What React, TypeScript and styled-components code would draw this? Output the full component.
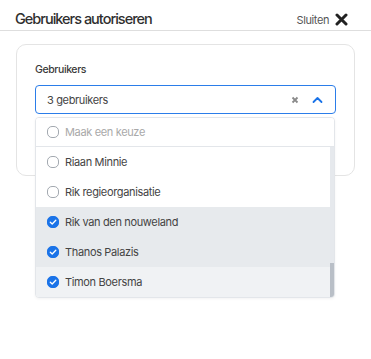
import styled, { createGlobalStyle } from "styled-components";

const GlobalStyle = createGlobalStyle`
  html, body {
    margin: 0;
    padding: 0;
    background: #ffffff;
    font-family: Inter, "Noto Sans", sans-serif;
  }
  #root {
    min-height: 100vh;
  }
`;

const Header = styled.div`
  height: 31px;
  display: flex;
  align-items: center;
  justify-content: space-between;
  padding: 9px 23px 0 15px;
  border-bottom: 1px solid #dedede;
  box-sizing: border-box;
`;

const Title = styled.h2`
  margin: 0;
  font-size: 14.5px;
  font-weight: 500;
  color: #2f2f2f;
  letter-spacing: -1px;
  line-height: 1;
`;

const CloseButton = styled.button`
  display: flex;
  align-items: center;
  gap: 6px;
  border: none;
  background: none;
  padding: 0;
  font-family: inherit;
  font-size: 11px;
  color: #555;
  letter-spacing: -0.4px;
  cursor: pointer;
`;

const Body = styled.div`
  padding: 13px 16px;
`;

const Card = styled.div`
  position: relative;
  height: 132px;
  box-sizing: border-box;
  border: 1px solid #e4e4e4;
  border-radius: 10px;
  padding: 18px 18px;
`;

const Label = styled.div`
  font-size: 10.5px;
  font-weight: 500;
  color: #3a3a3a;
  letter-spacing: -0.4px;
  line-height: 14px;
  margin-bottom: 8px;
`;

const Select = styled.div`
  position: relative;
  height: 29px;
  box-sizing: border-box;
  border: 1px solid #2b7de9;
  border-radius: 4px;
  display: flex;
  align-items: center;
  padding: 0 12px 0 11px;
  font-size: 11px;
  color: #444;
  letter-spacing: -0.35px;
`;

const SelectValue = styled.span`
  flex: 1;
`;

const SelectIcons = styled.div`
  display: flex;
  align-items: center;
  gap: 13px;
`;

const Menu = styled.div`
  position: absolute;
  top: 31px;
  left: -1px;
  width: 298px;
  background: #fff;
  border: 1px solid #e3e6ea;
  border-radius: 4px;
  box-shadow: 0 1px 3px rgba(0, 0, 0, 0.05);
  z-index: 2;
  overflow: hidden;
`;

const List = styled.div`
  display: flex;
  height: 150px;
`;

const Rows = styled.div`
  flex: 1;
`;

const ScrollTrack = styled.div`
  width: 4px;
  background: #e6e9ed;
  display: flex;
  flex-direction: column;
`;

const ScrollThumb = styled.div`
  margin-top: auto;
  height: 34px;
  background: #b9bfc7;
`;

const Row = styled.div<{ $bg?: string; $header?: boolean }>`
  height: ${(p) => (p.$header ? 29 : 30)}px;
  box-sizing: border-box;
  display: flex;
  align-items: center;
  gap: 6px;
  padding-left: 11px;
  background: ${(p) => p.$bg || "#fff"};
  border-bottom: ${(p) => (p.$header ? "1px solid #e3e6ea" : "none")};
  font-size: 11px;
  letter-spacing: -0.35px;
  color: ${(p) => (p.$header ? "#a9a9a9" : "#444")};
`;

const Box = styled.span<{ $checked?: boolean }>`
  width: 12px;
  height: 12px;
  box-sizing: border-box;
  border-radius: 5px;
  border: 1px solid ${(p) => (p.$checked ? "#1a73e8" : "#a3a9b0")};
  background: ${(p) => (p.$checked ? "#1a73e8" : "#fff")};
  display: flex;
  align-items: center;
  justify-content: center;
  flex-shrink: 0;
`;

const Check = () => (
  <svg width="8" height="8" viewBox="0 0 8 8">
    <path d="M1.3 4.2 L3.2 6 L6.8 2.2" fill="none" stroke="#fff" strokeWidth="1.3" strokeLinecap="round" strokeLinejoin="round" />
  </svg>
);

const users = [
  { name: "Riaan Minnie", checked: false },
  { name: "Rik regieorganisatie", checked: false },
  { name: "Rik van den nouweland", checked: true, bg: "#e7eaed" },
  { name: "Thanos Palazis", checked: true, bg: "#e7eaed" },
  { name: "Timon Boersma", checked: true, bg: "#f0f2f4" },
];

export default function App() {
  return (
    <>
      <GlobalStyle />
      <Header>
        <Title>Gebruikers autoriseren</Title>
        <CloseButton>
          Sluiten
          <svg width="13" height="13" viewBox="0 0 13 13">
            <path d="M2 2 L11 11 M11 2 L2 11" stroke="#222" strokeWidth="3" strokeLinecap="round" />
          </svg>
        </CloseButton>
      </Header>
      <Body>
        <Card>
          <Label>Gebruikers</Label>
          <Select>
            <SelectValue>3 gebruikers</SelectValue>
            <SelectIcons>
              <svg width="8" height="8" viewBox="0 0 8 8">
                <path d="M1.5 1.5 L6.5 6.5 M6.5 1.5 L1.5 6.5" stroke="#8a8a8a" strokeWidth="1.8" />
              </svg>
              <svg width="11" height="8" viewBox="0 0 11 8">
                <path d="M1.5 6 L5.5 2 L9.5 6" fill="none" stroke="#1a73e8" strokeWidth="1.8" strokeLinecap="round" strokeLinejoin="round" />
              </svg>
            </SelectIcons>
            <Menu>
              <Row $header>
                <Box />
                Maak een keuze
              </Row>
              <List>
                <Rows>
                  {users.map((u) => (
                    <Row key={u.name} $bg={u.bg}>
                      <Box $checked={u.checked}>{u.checked && <Check />}</Box>
                      {u.name}
                    </Row>
                  ))}
                </Rows>
                <ScrollTrack>
                  <ScrollThumb />
                </ScrollTrack>
              </List>
            </Menu>
          </Select>
        </Card>
      </Body>
    </>
  );
}
